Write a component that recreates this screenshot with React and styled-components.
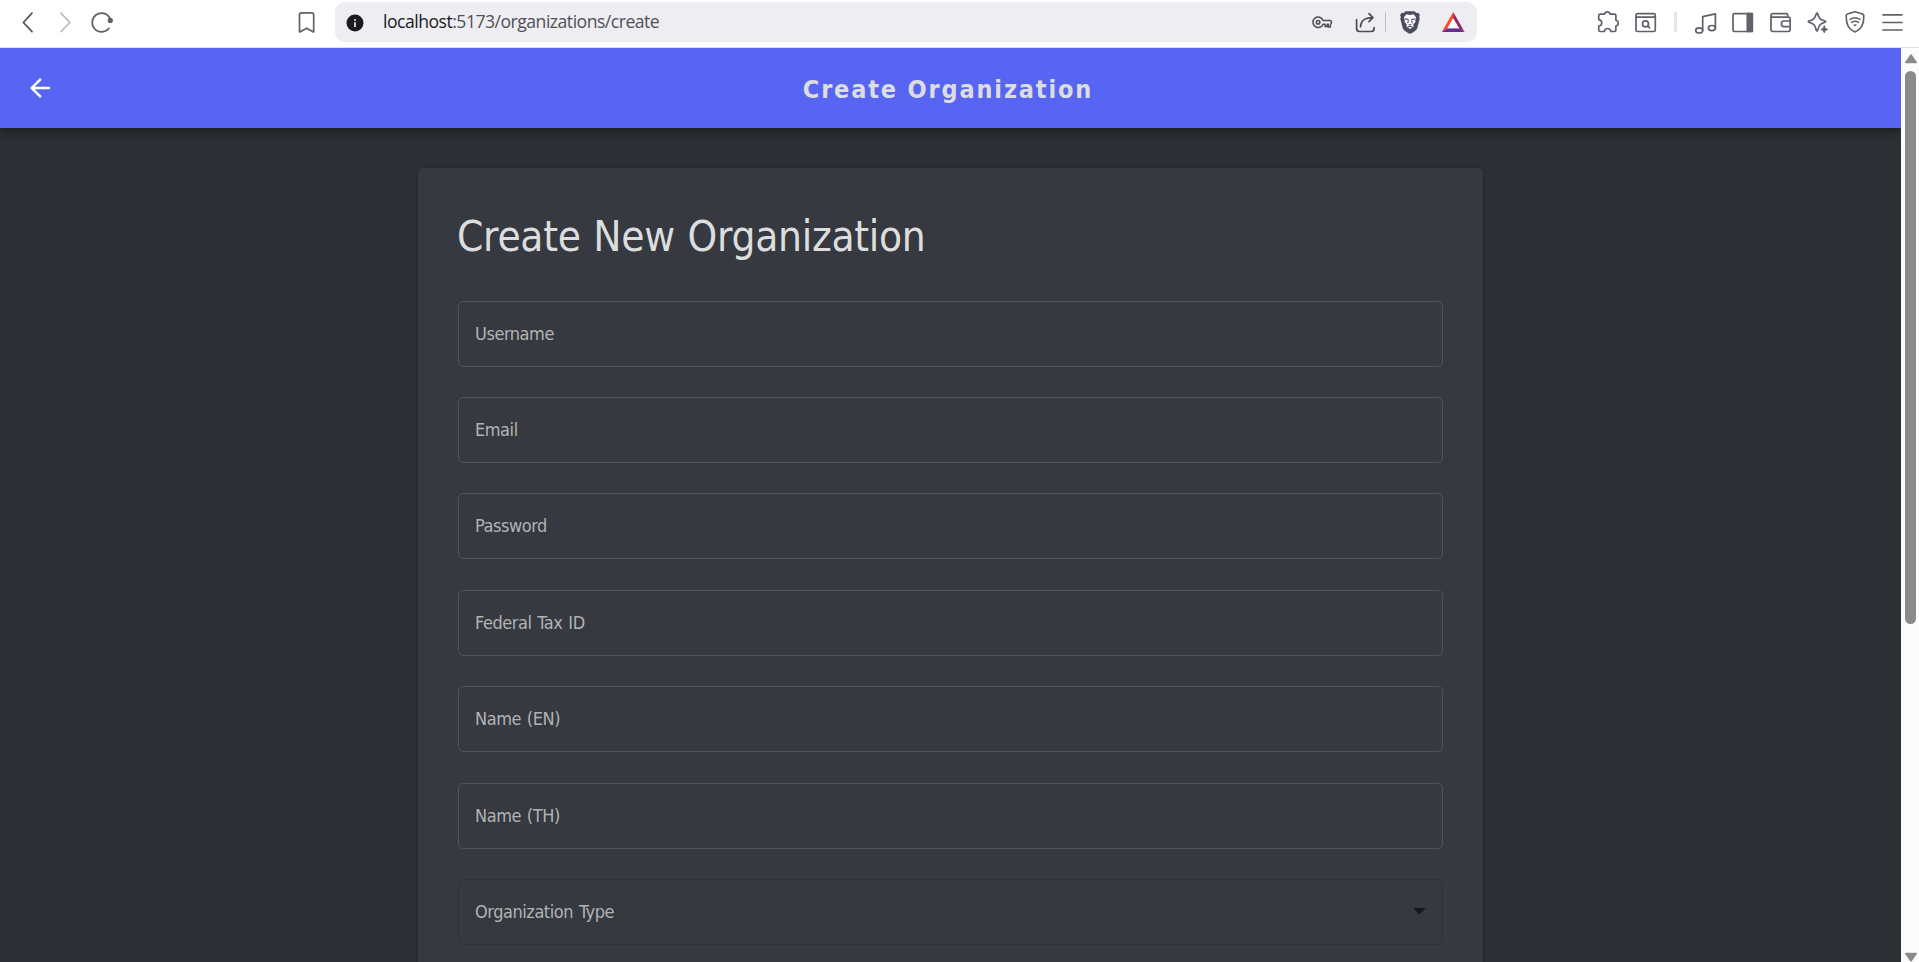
import React from "react";
import styled, { createGlobalStyle } from "styled-components";

const GlobalStyle = createGlobalStyle`
  * { box-sizing: border-box; }
  html, body { margin: 0; padding: 0; overflow: hidden; }
`;

const condensed = `"DejaVu Sans Condensed", "DejaVu Sans", sans-serif`;

const Window = styled.div`
  display: flex;
  flex-direction: column;
  width: 1919px;
  height: 962px;
  overflow: hidden;
  background: #2c2f33;
  font-family: ${condensed};
  font-stretch: condensed;
`;

const Toolbar = styled.div`
  display: flex;
  flex: none;
  height: 48px;
  padding: 2px 0 5px;
  background: #fff;
  border-bottom: 1px solid #dedfe3;
`;

const Icon = styled.svg`
  display: block;
  flex: none;
  width: 24px;
  height: 40px;
  margin-left: ${(p) => p.$gap || 0}px;
  fill: none;
  stroke: ${(p) => p.$color || "#5f6269"};
  stroke-width: 1.7;
  stroke-linecap: round;
  stroke-linejoin: round;
  overflow: visible;
`;

const AddressBar = styled.div`
  display: flex;
  flex: none;
  width: 1142px;
  height: 40px;
  margin-left: 16px;
  padding-left: 8px;
  border-radius: 10px;
  background: #ededf2;
`;

const Url = styled.div`
  width: 280px;
  margin-left: 16px;
  font: 400 17.6px/39px "Open Sans", sans-serif;
  font-stretch: normal;
  letter-spacing: -0.5px;
  color: #505056;
  white-space: nowrap;
  b { font-weight: 400; color: #1b1a20; }
`;

const Separator = styled.div`
  flex: none;
  align-self: center;
  width: ${(p) => p.$width}px;
  height: 20px;
  margin-left: ${(p) => p.$gap}px;
  border-radius: 1px;
  background: ${(p) => p.$color};
`;

const Viewport = styled.div`
  display: flex;
  flex: 1;
  min-height: 0;
`;

const Page = styled.main`
  display: flex;
  flex-direction: column;
  align-items: center;
  width: 1901px;
  overflow: hidden;
`;

const AppBar = styled.header`
  display: flex;
  flex: none;
  align-items: center;
  width: 100%;
  height: 80px;
  padding: 0 60px 0 25px;
  background: #5865f2;
  box-shadow: 0 2px 5px -1px rgba(0,0,0,.2), 0 5px 6px rgba(0,0,0,.14), 0 1px 12px rgba(0,0,0,.12);
`;

const BackArrow = styled.svg`
  width: 30px;
  height: 30px;
  fill: #fff;
`;

const BarTitle = styled.div`
  flex: 1;
  padding-top: 3px;
  text-align: center;
  font-size: 25px;
  font-weight: 700;
  letter-spacing: 1.85px;
  color: #dcddde;
  white-space: nowrap;
`;

const Card = styled.section`
  flex: none;
  width: 1065px;
  height: 900px;
  margin-top: 40px;
  padding: 40px;
  border-radius: 5px;
  background: #36393f;
  box-shadow: 0 2px 1px -1px rgba(0,0,0,.2), 0 1px 1px rgba(0,0,0,.14), 0 1px 4px rgba(0,0,0,.22);
`;

const CardTitle = styled.h1`
  height: 52px;
  margin: 0 0 40.6px -1px;
  font-size: 42px;
  font-weight: 400;
  line-height: 58px;
  letter-spacing: -0.3px;
  word-spacing: 1px;
  color: #dcddde;
  white-space: nowrap;
`;

const Form = styled.div`
  display: flex;
  flex-direction: column;
  gap: 30.4px;
`;

const Field = styled.div`
  display: flex;
  align-items: center;
  justify-content: space-between;
  height: 66px;
  padding: 0 16px 1px;
  border: 1px solid ${(p) => (p.$select ? "#2f3236" : "#4f545c")};
  border-radius: 5px;
  font-size: 18px;
  letter-spacing: -0.45px;
  word-spacing: 1.2px;
  color: #b2b3b6;
`;

const Caret = styled.svg`
  width: 13px;
  height: 7px;
  margin-top: 1px;
  fill: #17181b;
`;

const Scrollbar = styled.div`
  display: flex;
  flex: none;
  flex-direction: column;
  align-items: center;
  width: 18px;
  padding: 6px 0 0 1px;
  background: #fcfcfc;
`;

const ScrollArrow = styled.svg`
  width: 12px;
  height: 10px;
  fill: #8b8b8b;
`;

const Thumb = styled.div`
  width: 11px;
  height: 553px;
  margin: 7px 0 328px;
  border-radius: 6px;
  background: #8b8b8b;
`;

const fields = ["Username", "Email", "Password", "Federal Tax ID", "Name (EN)", "Name (TH)"];

export default function App() {
  return (
    <Window>
      <GlobalStyle />
      <Toolbar>
        <Icon $gap={16} viewBox="16 2 24 40" $color="#50535a"><path d="M32 13.2 23.4 22.5 32 31.6" /></Icon>
        <Icon $gap={14} viewBox="54 2 24 40" $color="#b9bbc0"><path d="M61 13.2 69.8 22.5 61 31.6" /></Icon>
        <Icon $gap={12} viewBox="90 2 24 40">
          <path d="M110 18.3A9.4 9.4 0 1 0 109 28.3" />
          <circle cx="110.3" cy="20.4" r="2.6" fill="#5f6269" stroke="none" />
        </Icon>
        <Icon $gap={181} viewBox="295 2 24 40">
          <path d="M301.5 12.9h10.2a2 2 0 0 1 2 2V31.6q0 .8-.8.2L306.6 28.2 300.3 31.8q-.8.6-.8-.2V14.9a2 2 0 0 1 2-2Z" />
        </Icon>
        <AddressBar>
          <Icon viewBox="343 2 24 40">
            <circle cx="355" cy="23" r="8.5" fill="#1b1a20" stroke="none" />
            <path d="M355 22.3V27" stroke="#ededf2" strokeLinecap="butt" />
            <circle cx="355" cy="19.9" r="1" fill="#ededf2" stroke="none" />
          </Icon>
          <Url><b>localhost</b>:5173/organizations/create</Url>
          <Icon $gap={647} viewBox="1310 2 24 40" $color="#4c4d53">
            <path d="M1323 20.4a5.2 5.2 0 1 0 0 3.8h2v2.2h2.2v-2.2h1v2.8h2.2v-2.8q1.1-.2 1.1-1.9t-1.4-1.9Z" strokeWidth="1.5" />
            <circle cx="1318.1" cy="22.3" r="1.8" strokeWidth="1.5" />
          </Icon>
          <Icon $gap={20} viewBox="1354 2 24 40" $color="#4c4d53">
            <path d="M1356.6 19.5V28.5q0 3 3 3h11.5q3 0 3-3V27.5M1360.5 26.8c.3-5.7 3-9 12-9.2M1369 13.6l3.9 4-3.9 4" />
          </Icon>
          <Separator $gap={7} $width={1} $color="#bfc0c6" />
          <Icon $gap={12} viewBox="1398 2 24 40">
            <path d="M1405.5 11.3h9l1.7 1.6 2-.2 1.7 2.4-.7 2 .5 1.7-2.4 9.2q-.5 1.7-2 2.7l-3.7 2.6q-1.6.9-3.2 0l-3.7-2.6q-1.5-1-2-2.7l-2.4-9.2.5-1.7-.7-2 1.7-2.4 2 .2Z" fill="#4a4d5b" stroke="none" />
            <path d="M1406.4 14.3l3.6.7 3.6-.7 2.5 3.1-.9 2.8.3 1.9-2.3 2.2.4 2.2-3.6 2.6-3.6-2.6.4-2.2-2.3-2.2.3-1.9-.9-2.8Z" fill="#fbfbfd" stroke="none" />
            <path d="M1405.2 18.8l3 .8M1414.8 18.8l-3 .8M1408.4 21l-.6 1.8M1411.6 21l.6 1.8M1409 24.8h2M1408 27l2-.8 2 .8" stroke="#4a4d5b" strokeWidth="1.1" />
          </Icon>
          <Icon $gap={19} viewBox="1441 2 24 40">
            <g stroke="none">
              <path d="M1453.2 12 1441.8 32l5.6-3.8 5.8-10Z" fill="#ff4724" />
              <path d="M1453.2 12 1464.6 32l-5.6-3.8-5.8-10Z" fill="#9e1f63" />
              <path d="M1441.8 32h22.8l-5.6-3.8h-11.6Z" fill="#662d91" />
              <path d="M1453.2 18.2l-5.8 10h11.6Z" fill="#fff" />
            </g>
          </Icon>
        </AddressBar>
        <Icon $gap={119} viewBox="1596 2 24 40">
          <path d="M1600.2 14.2h4.3q.5-2.4 2.8-2.4t2.8 2.4h4.3q1.5 0 1.5 1.5v4.6q2.4.8 2.4 2.9t-2.4 2.9v3.9q0 1.5-1.5 1.5h-3.5q-.6-3-3.3-3t-3.3 3h-4.1q-1.5 0-1.5-1.5v-3.9q3.1-.7 3.1-3.2t-3.1-3.2v-4q0-1.5 1.5-1.5Z" />
        </Icon>
        <Icon $gap={14} viewBox="1634 2 24 40">
          <rect x="1636" y="13.7" width="19.3" height="17.8" rx="1.6" /><path d="M1636 17.2h19.3" />
          <circle cx="1645.5" cy="23.9" r="3" /><path d="M1647.8 26.2l1.8 1.6" />
        </Icon>
        <Separator $gap={16} $width={3} $color="#e4e4ea" />
        <Icon $gap={17} viewBox="1694 2 24 40">
          <path d="M1702.7 30V16.7L1715.4 13.8V27.8" />
          <ellipse cx="1699.2" cy="30.4" rx="3.5" ry="2.6" /><ellipse cx="1711.9" cy="28.1" rx="3.5" ry="2.6" />
        </Icon>
        <Icon $gap={13} viewBox="1731 2 24 40">
          <rect x="1733" y="13.7" width="19.2" height="17.8" rx="1.2" /><path d="M1747.3 13.7h5v17.8h-5Z" fill="#5f6269" />
        </Icon>
        <Icon $gap={14} viewBox="1769 2 24 40">
          <path d="M1771 15V29.6q0 1.9 1.9 1.9h15.3q1.9 0 1.9-1.9V19q0-1.9-1.9-1.9h-15.3q-1.9 0-1.9-1.7t1.9-1.7h13.2q1.7 0 1.7 1.7v1.5M1790.1 21h-6.4q-2.3 0-2.3 2.8t2.3 2.8h6.4" />
        </Icon>
        <Icon $gap={13} viewBox="1806 2 24 40">
          <path d="M1817 13q.5 0 .7.8c1.3 4.6 2.3 5.6 7.3 7.2q1.4.6 0 1.2c-5 1.6-6 2.6-7.3 8q-.7 1.6-1.4 0c-1.3-5.4-2.3-6.4-7.3-8q-1.4-.6 0-1.2c5-1.6 6-2.6 7.3-7.2q.2-.8.7-.8Z" />
          <path d="M1824.3 26l1 2.4 2.4 1-2.4 1-1 2.4-1-2.4-2.4-1 2.4-1Z" fill="#5f6269" strokeWidth="1" />
        </Icon>
        <Icon $gap={13} viewBox="1843 2 24 40">
          <path d="M1855 11.7l7.6 2.3q1.2.4 1.2 1.6c.3 8-1.5 13.6-8.8 16.4-7.3-2.8-9.1-8.4-8.8-16.4q0-1.2 1.2-1.6Z" />
          <path d="M1850 19.5q5-3.6 10 0M1851.5 22.4q3.5-2.5 7 0" strokeWidth="1.5" />
          <path d="M1853 24.8q2-1.3 4 0l-2 1.7Z" fill="#5f6269" stroke="none" />
        </Icon>
        <Icon $gap={14} viewBox="1881 2 24 40">
          <path d="M1883 14.8h19M1883 22.5h19M1883 30h19" />
        </Icon>
      </Toolbar>
      <Viewport>
        <Page>
          <AppBar>
            <BackArrow viewBox="0 0 24 24"><path d="M20 11H7.83l5.59-5.59L12 4l-8 8 8 8 1.41-1.41L7.83 13H20z" /></BackArrow>
            <BarTitle>Create Organization</BarTitle>
          </AppBar>
          <Card>
            <CardTitle>Create New Organization</CardTitle>
            <Form>
              {fields.map((f) => <Field key={f}>{f}</Field>)}
              <Field $select>
                Organization Type
                <Caret viewBox="0 0 13 7"><path d="M0 0h13L6.5 6.6Z" /></Caret>
              </Field>
            </Form>
          </Card>
        </Page>
        <Scrollbar>
          <ScrollArrow viewBox="0 0 12 10"><path d="M5 1q1-1.4 2 0l5 7.2q.3 1-.8 1H.8q-1.1 0-.8-1Z" /></ScrollArrow>
          <Thumb />
          <ScrollArrow viewBox="0 0 12 10"><path d="M5 9q1 1.4 2 0l5-7.2q.3-1-.8-1H.8q-1.1 0-.8 1Z" /></ScrollArrow>
        </Scrollbar>
      </Viewport>
    </Window>
  );
}
